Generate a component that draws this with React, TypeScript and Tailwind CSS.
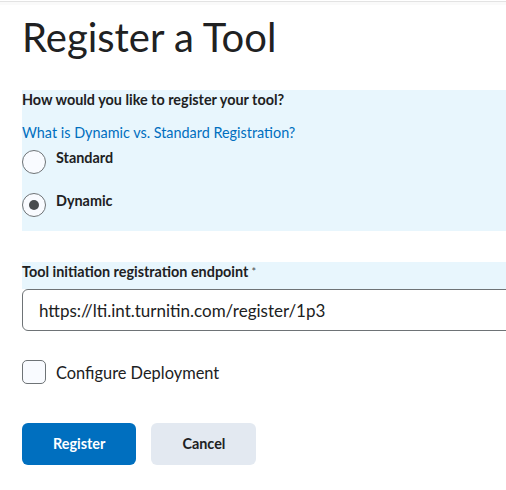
import { useState } from 'react'

export default function App() {
  const [mode, setMode] = useState<'standard' | 'dynamic'>('dynamic')
  const [deploy, setDeploy] = useState(false)

  return (
    <div
      className="w-[506px] h-[490px] overflow-hidden bg-white text-[#202122]"
      style={{ fontFamily: 'Lato, "Noto Sans", sans-serif' }}
    >
      <div className="h-[1px] bg-white" />
      <div className="h-[1px] bg-[#e3e3e3]" />
      <div className="h-[3px] bg-[#fafafa]" />

      <div className="w-[640px] pl-[22px]">
        <h1 className="mt-[8px] text-[40px] leading-[48px] font-normal">Register a Tool</h1>

        {/* registration type */}
        <div className="mt-[29px] bg-[#e8f6fd] pb-[14px]">
          <p className="text-[14.4px] leading-[20px] font-bold">How would you like to register your tool?</p>
          <a href="#" className="mt-[13px] block text-[14.4px] leading-[20px] text-[#006fbf]">
            What is Dynamic vs. Standard Registration?
          </a>
          <div className="mt-[5px] flex flex-col gap-[17px]">
            {[
              { id: 'standard' as const, label: 'Standard' },
              { id: 'dynamic' as const, label: 'Dynamic' },
            ].map((opt) => (
              <label key={opt.id} className="flex items-start gap-[10px] cursor-pointer">
                <span
                  onClick={() => setMode(opt.id)}
                  className="mt-[2px] flex h-6 w-6 shrink-0 items-center justify-center rounded-full border border-[#6e7376] bg-[#f9fbff]"
                >
                  {mode === opt.id && <span className="h-[10px] w-[10px] rounded-full bg-[#494c4e]" />}
                </span>
                <span className="text-[14.4px] leading-[20px] font-bold">{opt.label}</span>
              </label>
            ))}
          </div>
        </div>

        {/* endpoint */}
        <div className="mt-[31px] bg-[#e8f6fd] pb-[7px]">
          <p className="text-[14.4px] leading-[20px] font-bold">
            Tool initiation registration endpoint
            <span className="ml-[3px] align-top text-[11px] font-normal text-[#494c4e]">*</span>
          </p>
        </div>
        <input
          readOnly
          value="https://lti.int.turnitin.com/register/1p3"
          className="block h-[42px] w-full rounded-[6px] border border-[#6e7376] bg-white pl-[16px] text-[17px] text-[#202122] outline-none"
        />

        {/* deployment */}
        <label className="mt-[29px] flex items-center gap-[10px] cursor-pointer" onClick={() => setDeploy(!deploy)}>
          <span className="flex h-6 w-6 items-center justify-center rounded-[5px] border border-[#6e7376] bg-[#f9fbff]">
            {deploy && <span className="text-[14px] leading-none">✓</span>}
          </span>
          <span className="text-[16.4px] leading-[24px] translate-y-[1px]">Configure Deployment</span>
        </label>

        <div className="mt-[39px] flex gap-[15px]">
          <button className="h-[42px] rounded-[6px] bg-[#006fbf] px-[31px] text-[14.4px] font-bold text-white">
            Register
          </button>
          <button className="h-[42px] rounded-[6px] bg-[#e3e9f1] px-[31px] text-[14.4px] font-bold text-[#202122]">
            Cancel
          </button>
        </div>
      </div>
    </div>
  )
}
